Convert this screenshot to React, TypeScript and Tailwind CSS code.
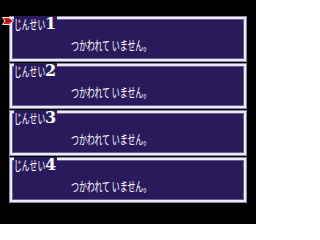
import React from 'react';

const slots = ['1', '2', '3', '4'];

function Cursor() {
  return (
    <svg className="absolute left-[-12px] top-[1px]" width="12" height="8" viewBox="0 0 12 8">
      <path d="M0.5 0.5 H7 L11.5 4 L7 7.5 H0.5 L3 4 Z" fill="#d01818" stroke="#f4e8e8" strokeWidth="1" />
      <path d="M4 4 H9" stroke="#701010" strokeWidth="1" />
    </svg>
  );
}

function Slot({ num, active }: { num: string; active: boolean }) {
  return (
    <div className="relative w-[236px] h-[44px] bg-[#2a1a5c] border-2 border-[#ecebf4] shadow-[0_0_0_1px_#8c86a8,inset_0_0_0_1px_#6a6090]">
      <div className="absolute left-[2px] top-[-3px] flex items-end h-[15px] pr-[1px] bg-[#2a1a5c] text-white">
        {active && <Cursor />}
        <span className="inline-block w-[31px] text-[13px] leading-[14px] origin-left scale-x-[0.6] whitespace-nowrap font-['Noto_Sans_CJK_JP',sans-serif]">
          じんせい
        </span>
        <span className="text-[16px] leading-[15px] font-bold font-['DejaVu_Serif',serif]">{num}</span>
      </div>
      <div className="pl-[59px] pt-[13px] text-white">
        <span className="inline-block text-[13px] leading-[14px] origin-left scale-x-[0.61] whitespace-nowrap font-['Noto_Sans_CJK_JP',sans-serif]">
          つかわれて いません。
        </span>
      </div>
    </div>
  );
}

export default function App() {
  return (
    <div className="w-[256px] h-[224px] bg-black pt-[17px] pl-[10px] flex flex-col gap-[3px] overflow-hidden">
      {slots.map((n, i) => (
        <Slot key={n} num={n} active={i === 0} />
      ))}
    </div>
  );
}
